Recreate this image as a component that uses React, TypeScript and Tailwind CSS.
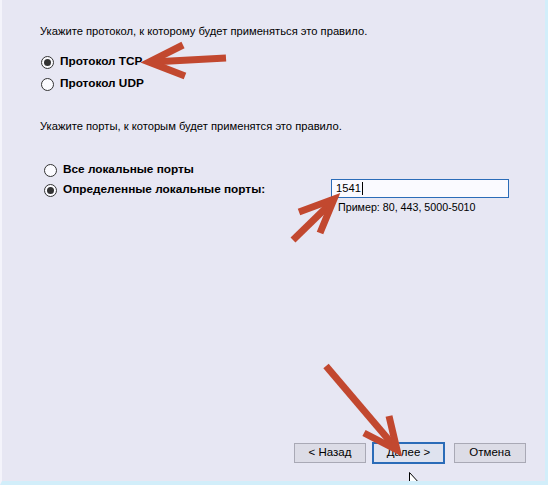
import React from 'react'

const FONT = { fontFamily: '"Liberation Sans", Arial, sans-serif' }

function Radio({ checked, label }: { checked?: boolean; label: string }) {
  return (
    <div className="flex items-center gap-[6px] h-[20px]">
      <span className="w-[13px] h-[13px] rounded-full border border-[#333333] bg-[#fbfbff] flex items-center justify-center shrink-0">
        {checked && <span className="w-[7px] h-[7px] rounded-full bg-[#333333]" />}
      </span>
      <span className="text-[11.8px] font-bold text-black leading-none whitespace-nowrap">{label}</span>
    </div>
  )
}

function Btn({ label, primary }: { label: string; primary?: boolean }) {
  return (
    <button
      className={
        primary
          ? 'w-[73px] h-[22px] border-2 border-[#2b6cb8] bg-[#dfe3ef] text-[11.5px] text-black leading-none'
          : 'w-[72px] h-[20px] border border-[#a9a9b5] bg-[#dcdce6] text-[11.5px] text-black leading-none'
      }
    >
      {label}
    </button>
  )
}

function Overlay() {
  const c = '#c2482f'
  return (
    <svg className="absolute inset-0 pointer-events-none" width={548} height={485} viewBox="0 0 548 485">
      {/* TCP arrow */}
      <g stroke={c} strokeWidth={7} fill="none" strokeLinejoin="miter">
        <line x1={224} y1={58} x2={150} y2={62} />
        <polyline points="181,45 147,62 183,76" />
      </g>
      {/* port arrow */}
      <g stroke={c} strokeWidth={7} fill="none" strokeLinejoin="miter">
        <line x1={291} y1={240} x2={329} y2={203} />
        <polyline points="297,212 332,199 318,233" />
      </g>
      {/* next arrow */}
      <g stroke={c} strokeWidth={7} fill="none" strokeLinejoin="miter">
        <line x1={324} y1={366} x2={392} y2={446} />
        <polyline points="362,433 395,450 387,416" />
      </g>
      {/* mouse cursor */}
      <path
        d="M407.5 472.5 L407.5 489 L411 485.5 L414 492 L416 491 L413 484.5 L418.5 484.5 Z"
        fill="#ffffff"
        stroke="#000000"
        strokeWidth={1}
      />
    </svg>
  )
}

export default function App() {
  return (
    <div
      className="relative w-[548px] h-[485px] overflow-hidden bg-[#e7e7f3] border-l-2 border-l-[#f4f4fb] border-r-[3px] border-r-[#d2eefa] border-b-[4px] border-b-[#d2eefa]"
      style={FONT}
    >
      <div className="flex flex-col h-full pl-[38px] pt-[25px]">
        <p className="text-[11.2px] text-black leading-[13px]">
          Укажите протокол, к которому будет применяться это правило.
        </p>

        <div className="flex flex-col gap-[2px] mt-[14px] pl-[1px]">
          <Radio checked label="Протокол TCP" />
          <Radio label="Протокол UDP" />
        </div>

        <p className="text-[11.2px] text-black leading-[13px] mt-[26px]">
          Укажите порты, к которым будет применятся это правило.
        </p>

        <div className="grid grid-cols-[287px_178px] mt-[27px] pl-[4px]">
          <Radio label="Все локальные порты" />
          <div />
          <Radio checked label="Определенные локальные порты:" />
          <div className="flex items-center h-[20px]">
            <div className="w-[178px] h-[19px] -mt-[3px] border border-[#2b6cb8] bg-[#fafaff] flex items-center pl-[4px]">
              <span className="text-[11.2px] text-black leading-none">1541</span>
              <span className="w-[1px] h-[13px] bg-black ml-[1px]" />
            </div>
          </div>
          <div />
          <p className="text-[10.7px] text-black leading-[13px] pl-[7px] mt-[1px]">Пример: 80, 443, 5000-5010</p>
        </div>

        <div className="mt-auto mb-[17px] flex items-center justify-end pr-[19px]">
          <Btn label="< Назад" />
          <div className="w-[6px]" />
          <Btn primary label="Далее >" />
          <div className="w-[9px]" />
          <Btn label="Отмена" />
        </div>
      </div>
      <Overlay />
    </div>
  )
}
